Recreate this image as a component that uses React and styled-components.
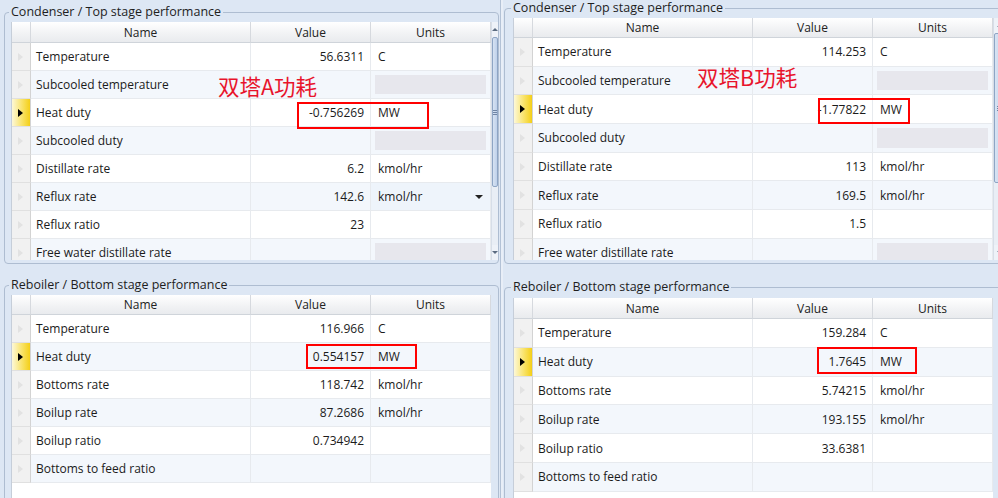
import React from "react";
import styled, { createGlobalStyle } from "styled-components";

const GlobalStyle = createGlobalStyle`
  html, body {
    margin: 0;
    padding: 0;
  }
  body {
    background: #dde7f4;
    font-family: "Segoe UI", "Open Sans", "Noto Sans", sans-serif;
    color: #1b1b1b;
  }
`;

const condenserA = [
  { name: "Temperature", value: "56.6311", units: "C" },
  { name: "Subcooled temperature", locked: true },
  { name: "Heat duty", value: "-0.756269", units: "MW", current: true },
  { name: "Subcooled duty", locked: true },
  { name: "Distillate rate", value: "6.2", units: "kmol/hr" },
  { name: "Reflux rate", value: "142.6", units: "kmol/hr", dropdown: true },
  { name: "Reflux ratio", value: "23" },
  { name: "Free water distillate rate", locked: true },
];

const reboilerA = [
  { name: "Temperature", value: "116.966", units: "C" },
  { name: "Heat duty", value: "0.554157", units: "MW", current: true },
  { name: "Bottoms rate", value: "118.742", units: "kmol/hr" },
  { name: "Boilup rate", value: "87.2686", units: "kmol/hr" },
  { name: "Boilup ratio", value: "0.734942" },
  { name: "Bottoms to feed ratio" },
];

const condenserB = [
  { name: "Temperature", value: "114.253", units: "C" },
  { name: "Subcooled temperature", locked: true },
  { name: "Heat duty", value: "-1.77822", units: "MW", current: true },
  { name: "Subcooled duty", locked: true },
  { name: "Distillate rate", value: "113", units: "kmol/hr" },
  { name: "Reflux rate", value: "169.5", units: "kmol/hr" },
  { name: "Reflux ratio", value: "1.5" },
  { name: "Free water distillate rate", locked: true },
];

const reboilerB = [
  { name: "Temperature", value: "159.284", units: "C" },
  { name: "Heat duty", value: "1.7645", units: "MW", current: true },
  { name: "Bottoms rate", value: "5.74215", units: "kmol/hr" },
  { name: "Boilup rate", value: "193.155", units: "kmol/hr" },
  { name: "Boilup ratio", value: "33.6381" },
  { name: "Bottoms to feed ratio" },
];

const Page = styled.div`
  position: relative;
  display: flex;
  width: 998px;
  height: 498px;
  overflow: hidden;
  background: #dde7f4;
`;

const Half = styled.div`
  display: flex;
  flex-direction: column;
  flex: none;
  width: ${(p) => p.$w}px;
  padding-left: ${(p) => p.$inset}px;
  box-sizing: border-box;
  overflow: hidden;
`;

const Divider = styled.div`
  flex: none;
  width: 3px;
  background: #e8eef7;
  border-left: 1px solid #b3c2d6;
  box-sizing: border-box;
`;

const Group = styled.fieldset`
  flex: none;
  width: ${(p) => p.$w}px;
  margin: ${(p) => p.$top}px 0 0 0;
  padding: ${(p) => p.$pt}px 0 ${(p) => p.$pb}px ${(p) => p.$pl}px;
  border: 1px solid #aebdd1;
  border-radius: 4px;
  box-sizing: border-box;
  min-width: 0;
`;

const Legend = styled.legend`
  margin-left: -2px;
  padding: 0 2px;
  font-size: 12.5px;
  line-height: 16px;
  color: #1e1e1e;
`;

const Body = styled.div`
  display: flex;
  height: ${(p) => p.$h}px;
  overflow: hidden;
`;

const TableFrame = styled.div`
  flex: none;
  width: 480px;
  background: #ffffff;
  border-left: 1px solid #c6ced9;
  box-sizing: border-box;
`;

const Row = styled.div`
  display: grid;
  grid-template-columns: 19px 220px 120px 120px;
  height: ${(p) => p.$h}px;
  background: ${(p) => (p.$alt ? "#f3f7fc" : "#ffffff")};
`;

const HeadCell = styled.div`
  display: flex;
  align-items: center;
  justify-content: center;
  font-size: 12px;
  color: #222;
  background: linear-gradient(#ffffff, #f1f2f4 60%, #e9ebee);
  border-right: 1px solid #d6d9de;
  border-bottom: 1px solid #cfd4da;
  box-sizing: border-box;
`;

const Indicator = styled.div`
  display: flex;
  align-items: center;
  justify-content: center;
  padding-right: 1px;
  background: ${(p) =>
    p.$current
      ? "linear-gradient(to right, #fdf8d8, #f9e36a 55%, #f4cf17)"
      : "#f1f1f1"};
  border-right: 1px solid #d3d3d3;
  border-bottom: 1px solid #e0e0e0;
  box-sizing: border-box;
`;

const Arrow = styled.span`
  width: 0;
  height: 0;
  border-left: 5px solid ${(p) => (p.$current ? "#000" : "#e2e2e2")};
  border-top: 4px solid transparent;
  border-bottom: 4px solid transparent;
`;

const Cell = styled.div`
  display: flex;
  align-items: center;
  justify-content: ${(p) => (p.$right ? "flex-end" : "flex-start")};
  padding: 0 ${(p) => (p.$right ? 6 : 0)}px 0 ${(p) => p.$pl || 0}px;
  font-size: 12px;
  white-space: nowrap;
  border-right: 1px solid #e7eaee;
  border-bottom: 1px solid #e7eaee;
  box-sizing: border-box;
  background: ${(p) => (p.$hover ? "#eef4fb" : "transparent")};
`;

const Locked = styled.div`
  align-self: stretch;
  flex: 1;
  margin: 4px 4px 4px -3px;
  background: #e7e7ed;
`;

const Caret = styled.span`
  margin-left: auto;
  margin-right: 7px;
  width: 0;
  height: 0;
  border-top: 4px solid #222;
  border-left: 4px solid transparent;
  border-right: 4px solid transparent;
`;

const Scrollbar = styled.div`
  flex: none;
  display: flex;
  flex-direction: column;
  width: ${(p) => p.$w}px;
  background: #e9eef5;
  border-left: 1px solid #d7dee8;
  box-sizing: border-box;
`;

const ScrollButton = styled.div`
  flex: none;
  height: 15px;
  display: flex;
  align-items: center;
  justify-content: center;
  background: #eef2f8;
`;

const ScrollGlyph = styled.span`
  width: 0;
  height: 0;
  border-left: 3px solid transparent;
  border-right: 3px solid transparent;
  ${(p) =>
    p.$up
      ? "border-bottom: 3px solid #5b6b80;"
      : "border-top: 3px solid #5b6b80;"}
`;

const Thumb = styled.div`
  flex: none;
  height: 150px;
  display: flex;
  align-items: center;
  justify-content: center;
  background: linear-gradient(to right, #d7e3f3, #bfd1ea);
  border: 1px solid #8ea5c4;
  border-radius: 2px;
  box-sizing: border-box;
`;

const Grip = styled.span`
  width: 5px;
  height: 5px;
  border-top: 1px solid #6f84a3;
  border-bottom: 1px solid #6f84a3;
  position: relative;
  box-sizing: border-box;
  &::after {
    content: "";
    position: absolute;
    left: 0;
    right: 0;
    top: 1px;
    border-top: 1px solid #6f84a3;
  }
`;

const Track = styled.div`
  flex: 1;
`;

const Note = styled.div`
  position: absolute;
  left: ${(p) => p.$x}px;
  top: ${(p) => p.$y}px;
  font-family: "Noto Sans CJK SC", "Noto Sans", sans-serif;
  font-size: 21.5px;
  line-height: 22px;
  color: #e8142c;
  white-space: nowrap;
`;

const Mark = styled.div`
  position: absolute;
  left: ${(p) => p.$x}px;
  top: ${(p) => p.$y}px;
  width: ${(p) => p.$w}px;
  height: ${(p) => p.$h}px;
  border: 2px solid #ff0000;
  box-sizing: border-box;
`;

function PerfTable({ rows, headH, rowH }) {
  return (
    <TableFrame>
      <Row $h={headH}>
        <HeadCell />
        <HeadCell>Name</HeadCell>
        <HeadCell>Value</HeadCell>
        <HeadCell>Units</HeadCell>
      </Row>
      {rows.map((r, i) => (
        <Row key={r.name} $h={rowH} $alt={i % 2 === 1}>
          <Indicator $current={r.current}>
            <Arrow $current={r.current} />
          </Indicator>
          <Cell $pl={5}>{r.name}</Cell>
          <Cell $right>{r.value}</Cell>
          <Cell $pl={7} $hover={r.dropdown}>
            {r.locked ? <Locked /> : r.units}
            {r.dropdown && <Caret />}
          </Cell>
        </Row>
      ))}
    </TableFrame>
  );
}

function VScroll({ w }) {
  return (
    <Scrollbar $w={w}>
      <ScrollButton>
        <ScrollGlyph $up />
      </ScrollButton>
      <Thumb>
        <Grip />
      </Thumb>
      <Track />
      <ScrollButton>
        <ScrollGlyph />
      </ScrollButton>
    </Scrollbar>
  );
}

export default function App() {
  return (
    <>
      <GlobalStyle />
      <Page>
        <Half $w={500} $inset={4}>
          <Group $w={495} $top={4} $pt={2} $pb={3} $pl={6}>
            <Legend>Condenser / Top stage performance</Legend>
            <Body $h={238}>
              <PerfTable rows={condenserA} headH={21} rowH={28} />
              <VScroll w={7} />
            </Body>
          </Group>
          <Group $w={495} $top={13} $pt={2} $pb={0} $pl={6}>
            <Legend>Reboiler / Bottom stage performance</Legend>
            <Body $h={230}>
              <PerfTable rows={reboilerA} headH={20} rowH={28} />
            </Body>
          </Group>
        </Half>
        <Divider />
        <Half $w={495} $inset={1}>
          <Group $w={520} $top={0} $pt={2} $pb={3} $pl={8}>
            <Legend>Condenser / Top stage performance</Legend>
            <Body $h={242}>
              <PerfTable rows={condenserB} headH={20} rowH={28.7} />
              <VScroll w={12} />
            </Body>
          </Group>
          <Group $w={520} $top={15} $pt={3} $pb={0} $pl={8}>
            <Legend>Reboiler / Bottom stage performance</Legend>
            <Body $h={230}>
              <PerfTable rows={reboilerB} headH={21} rowH={28.8} />
            </Body>
          </Group>
        </Half>

        <Note $x={218} $y={75}>双塔A功耗</Note>
        <Mark $x={297} $y={102} $w={132} $h={27} />
        <Mark $x={306} $y={344} $w={111} $h={25} />

        <Note $x={697} $y={66}>双塔B功耗</Note>
        <Mark $x={818} $y={98} $w={92} $h={26} />
        <Mark $x={817} $y={347} $w={100} $h={27} />
      </Page>
    </>
  );
}
